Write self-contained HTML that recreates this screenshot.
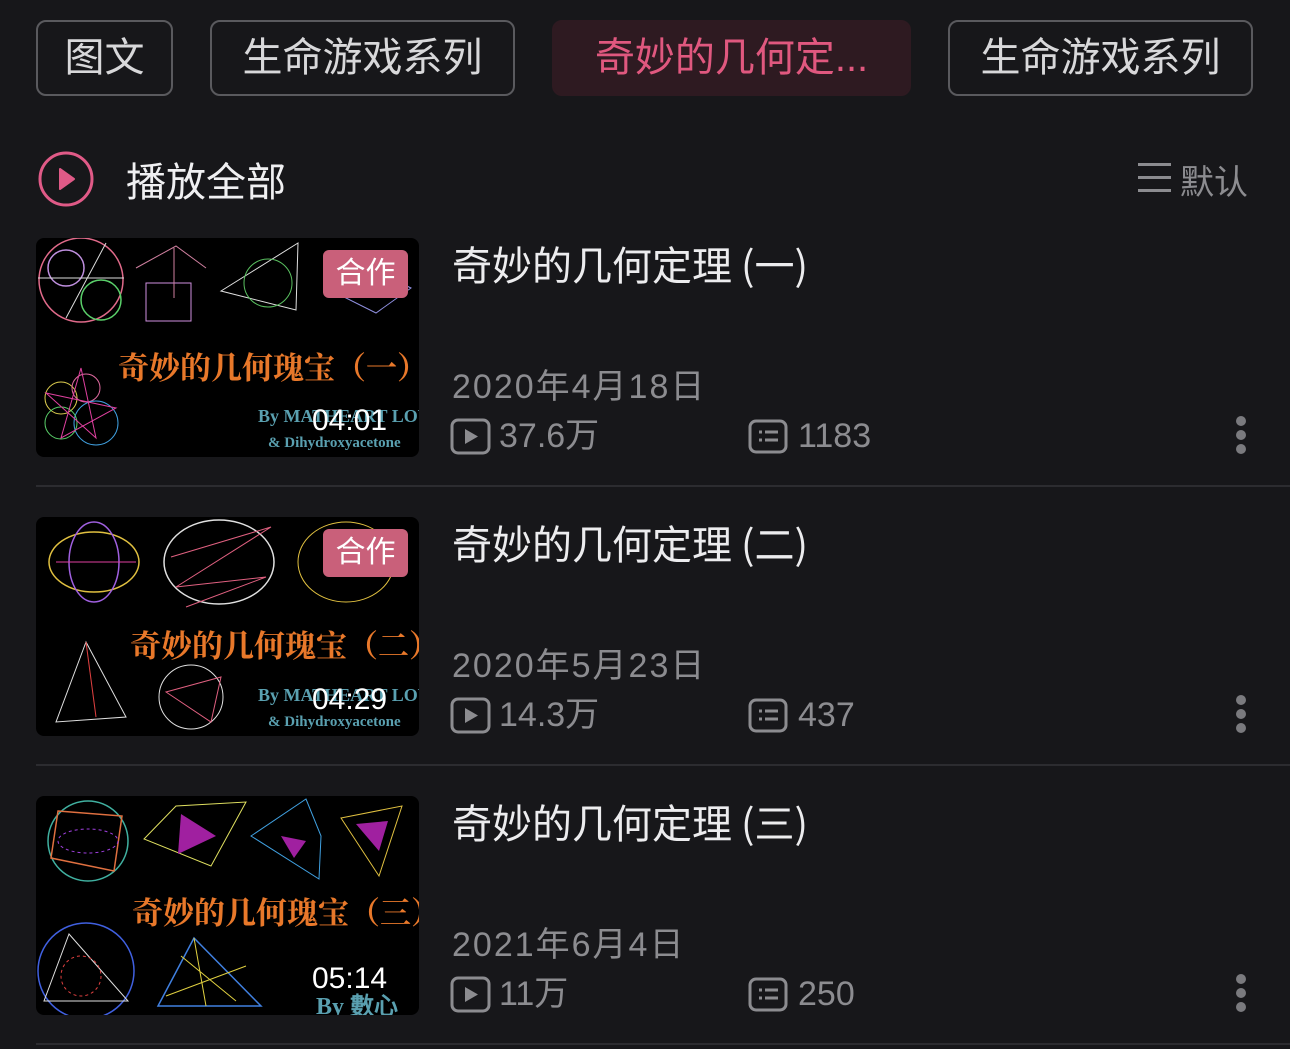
<!DOCTYPE html>
<html><head><meta charset="utf-8"><style>
*{margin:0;padding:0;box-sizing:border-box}
body{width:1290px;height:1049px;background:#17171a;position:relative;overflow:hidden;font-family:"Liberation Sans","Noto Sans CJK SC",sans-serif;color:#e8e8ea}
.a{position:absolute;white-space:nowrap}
.tab{position:absolute;top:20px;height:76px;border:2px solid #5a5a5e;border-radius:10px;font-size:40px;line-height:72px;text-align:center;color:#d8d8da}
.thumb{position:absolute;left:36px;width:383px;height:219px;background:#000;border-radius:8px;overflow:hidden}
.badge{position:absolute;left:287px;top:12px;width:85px;height:48px;background:#c9607a;border-radius:6px;color:#fff;font-size:30px;line-height:48px;text-align:center}
.dur{position:absolute;left:276px;font-size:30px;color:#fff}
.t{font-size:40px;color:#ececee;left:452px;font-family:"Noto Sans CJK SC",sans-serif;line-height:52px}
.d{font-size:34px;color:#8c8c90;left:452px;letter-spacing:2px;line-height:40px}
.s{font-size:34px;color:#8c8c90;line-height:40px}
.sep{position:absolute;left:36px;right:0;height:2px;background:#2c2c30}
.dots{position:absolute;left:1236px;width:10px}
.dots i{display:block;width:10px;height:10px;border-radius:5px;background:#7a7a7e;margin-bottom:4px}
.ot{position:absolute;font-size:31px;color:#e8782a;font-family:"Noto Serif CJK SC",serif;font-weight:bold;white-space:nowrap}
.by{position:absolute;font-size:15px;color:#5aa0b0;font-family:"Liberation Serif",serif;font-weight:bold;white-space:nowrap}
</style></head><body>
<div class="tab" style="left:36px;width:137px">图文</div>
<div class="tab" style="left:210px;width:305px">生命游戏系列</div>
<div class="tab" style="left:552px;width:359px;border-color:#2e1a21;background:#2e1a21;color:#e0587f">奇妙的几何定...</div>
<div class="tab" style="left:948px;width:305px">生命游戏系列</div>

<svg class="a" style="left:36px;top:151px" width="60" height="56"><circle cx="30" cy="28" r="26" fill="none" stroke="#e05a87" stroke-width="3"/><path d="M24 18 L38 28 L24 38Z" fill="#e05a87" stroke="#e05a87" stroke-width="2" stroke-linejoin="round"/></svg>
<div class="a" style="left:126px;top:150px;font-size:40px;color:#f0f0f2">播放全部</div>
<svg class="a" style="left:1138px;top:162px" width="34" height="30"><rect x="0" y="1" width="33" height="3" fill="#8c8c90"/><rect x="0" y="14" width="33" height="3" fill="#8c8c90"/><rect x="0" y="27" width="33" height="3" fill="#8c8c90"/></svg>
<div class="a" style="left:1180px;top:155px;font-size:34px;color:#8c8c90">默认</div>

<!-- row 1 -->
<div class="thumb" style="top:238px">
<svg width="383" height="219" style="position:absolute;left:0;top:0">
<circle cx="45" cy="42" r="42" fill="none" stroke="#e06a8a" stroke-width="1.5"/><circle cx="65" cy="62" r="20" fill="none" stroke="#5ad06a" stroke-width="1.5"/><circle cx="30" cy="30" r="18" fill="none" stroke="#c090e0" stroke-width="1.5"/><line x1="2" y1="40" x2="88" y2="40" stroke="#ddd"/><line x1="30" y1="80" x2="70" y2="5" stroke="#ddd"/>
<rect x="110" y="45" width="45" height="38" fill="none" stroke="#d090e0"/><path d="M100 30 L140 8 L170 30 M138 10 L138 60" stroke="#d080a0" fill="none"/>
<path d="M185 53 L262 5 L260 72Z" fill="none" stroke="#e0e0e0"/><circle cx="232" cy="45" r="24" fill="none" stroke="#5ac060"/>
<path d="M290 50 L330 28 L375 50 L340 75Z" fill="none" stroke="#9090e0"/>
<circle cx="25" cy="160" r="16" fill="none" stroke="#e0d050"/><circle cx="50" cy="150" r="14" fill="none" stroke="#e06aa0"/><circle cx="60" cy="185" r="22" fill="none" stroke="#40a0e0"/><circle cx="25" cy="185" r="16" fill="none" stroke="#5ad06a"/><path d="M10 155 L80 170 L25 200 L45 130 L60 200Z" fill="none" stroke="#e040a0"/>
</svg>
<div class="badge">合作</div>
<div class="ot" style="left:82px;top:105px">奇妙的几何瑰宝（一）</div>
<div class="by" style="left:222px;top:168px;font-size:18px">By MATHEART LOVER</div>
<div class="by" style="left:232px;top:197px">&amp; Dihydroxyacetone</div>
<div class="dur" style="top:166px">04:01</div>
</div>
<div class="a t" style="top:237px">奇妙的几何定理 (一)</div>
<div class="a d" style="top:367px">2020年4月18日</div>

<!-- row 2 -->
<div class="thumb" style="top:517px">
<svg width="383" height="219" style="position:absolute;left:0;top:0">
<ellipse cx="58" cy="45" rx="45" ry="30" fill="none" stroke="#e0c040" stroke-width="1.5"/><ellipse cx="58" cy="45" rx="25" ry="40" fill="none" stroke="#a060e0" stroke-width="1.5"/><line x1="20" y1="45" x2="100" y2="45" stroke="#e040a0"/>
<ellipse cx="183" cy="45" rx="55" ry="42" fill="none" stroke="#e0e0e0" stroke-width="1.5"/><path d="M135 40 L235 10 L140 70 L230 60 L150 90" fill="none" stroke="#e06080"/>
<ellipse cx="310" cy="45" rx="48" ry="40" fill="none" stroke="#e0c040"/>
<path d="M50 125 L20 205 L90 200Z" fill="none" stroke="#e0e0e0"/><line x1="50" y1="125" x2="60" y2="200" stroke="#e04040"/>
<circle cx="155" cy="180" r="32" fill="none" stroke="#e0e0e0"/><path d="M130 175 L185 160 L175 205Z" fill="none" stroke="#e06080"/>
</svg>
<div class="badge">合作</div>
<div class="ot" style="left:94px;top:104px">奇妙的几何瑰宝（二）</div>
<div class="by" style="left:222px;top:168px;font-size:18px">By MATHEART LOVER</div>
<div class="by" style="left:232px;top:197px">&amp; Dihydroxyacetone</div>
<div class="dur" style="top:166px">04:29</div>
</div>
<div class="a t" style="top:516px">奇妙的几何定理 (二)</div>
<div class="a d" style="top:646px">2020年5月23日</div>

<!-- row 3 -->
<div class="thumb" style="top:796px">
<svg width="383" height="219" style="position:absolute;left:0;top:0">
<circle cx="52" cy="45" r="40" fill="none" stroke="#40b0a0" stroke-width="1.5"/><path d="M22 15 L86 20 L78 75 L15 62Z" fill="none" stroke="#e07040" stroke-width="1.5"/><ellipse cx="52" cy="45" rx="30" ry="12" fill="none" stroke="#a040e0" stroke-dasharray="3 3"/>
<path d="M108 43 L140 10 L210 6 L175 70Z" fill="none" stroke="#e0e060"/><path d="M145 18 L180 40 L142 58Z" fill="#a020a0"/>
<path d="M215 40 L270 3 L285 40 L283 83Z" fill="none" stroke="#40a0e0"/><path d="M245 40 L270 45 L258 62Z" fill="#a020a0"/>
<path d="M305 22 L366 10 L343 80Z" fill="none" stroke="#e0c040"/><path d="M320 28 L352 25 L343 55Z" fill="#a020a0"/>
<circle cx="50" cy="175" r="48" fill="none" stroke="#4060e0" stroke-width="1.5"/><path d="M33 138 L8 205 L92 205Z" fill="none" stroke="#e0e0e0"/><circle cx="45" cy="180" r="20" fill="none" stroke="#e04040" stroke-dasharray="3 3"/>
<path d="M158 142 L122 210 L225 210Z" fill="none" stroke="#4080e0" stroke-width="1.5"/><path d="M130 200 L210 170 M145 160 L200 205 M158 142 L170 210" stroke="#e0d040" fill="none"/>
</svg>
<div class="ot" style="left:96px;top:92px">奇妙的几何瑰宝（三）</div>
<div class="by" style="left:280px;top:190px;font-size:24px">By 數心</div>
<div class="dur" style="top:166px">05:14</div>
</div>
<div class="a t" style="top:795px">奇妙的几何定理 (三)</div>
<div class="a d" style="top:925px">2021年6月4日</div>

<!-- stats -->
<svg class="a" style="left:450px;top:418px" width="42" height="38"><rect x="2" y="2" width="37" height="33" rx="6" fill="none" stroke="#8c8c90" stroke-width="3"/><path d="M15 11 L28 18.5 L15 26Z" fill="#8c8c90"/></svg>
<div class="a s" style="left:499px;top:416px">37.6万</div>
<svg class="a" style="left:748px;top:418px" width="42" height="38"><rect x="2" y="3" width="36" height="31" rx="6" fill="none" stroke="#8c8c90" stroke-width="3"/><path d="M11 14h3M17 14h13M11 22h3M17 22h13" stroke="#8c8c90" stroke-width="3"/></svg>
<div class="a s" style="left:798px;top:416px">1183</div>
<div class="dots" style="top:416px"><i></i><i></i><i></i></div>
<div class="sep" style="top:485px"></div>

<svg class="a" style="left:450px;top:697px" width="42" height="38"><rect x="2" y="2" width="37" height="33" rx="6" fill="none" stroke="#8c8c90" stroke-width="3"/><path d="M15 11 L28 18.5 L15 26Z" fill="#8c8c90"/></svg>
<div class="a s" style="left:499px;top:695px">14.3万</div>
<svg class="a" style="left:748px;top:697px" width="42" height="38"><rect x="2" y="3" width="36" height="31" rx="6" fill="none" stroke="#8c8c90" stroke-width="3"/><path d="M11 14h3M17 14h13M11 22h3M17 22h13" stroke="#8c8c90" stroke-width="3"/></svg>
<div class="a s" style="left:798px;top:695px">437</div>
<div class="dots" style="top:695px"><i></i><i></i><i></i></div>
<div class="sep" style="top:764px"></div>

<svg class="a" style="left:450px;top:976px" width="42" height="38"><rect x="2" y="2" width="37" height="33" rx="6" fill="none" stroke="#8c8c90" stroke-width="3"/><path d="M15 11 L28 18.5 L15 26Z" fill="#8c8c90"/></svg>
<div class="a s" style="left:499px;top:974px">11万</div>
<svg class="a" style="left:748px;top:976px" width="42" height="38"><rect x="2" y="3" width="36" height="31" rx="6" fill="none" stroke="#8c8c90" stroke-width="3"/><path d="M11 14h3M17 14h13M11 22h3M17 22h13" stroke="#8c8c90" stroke-width="3"/></svg>
<div class="a s" style="left:798px;top:974px">250</div>
<div class="dots" style="top:974px"><i></i><i></i><i></i></div>
<div class="sep" style="top:1043px"></div>
</body></html>
